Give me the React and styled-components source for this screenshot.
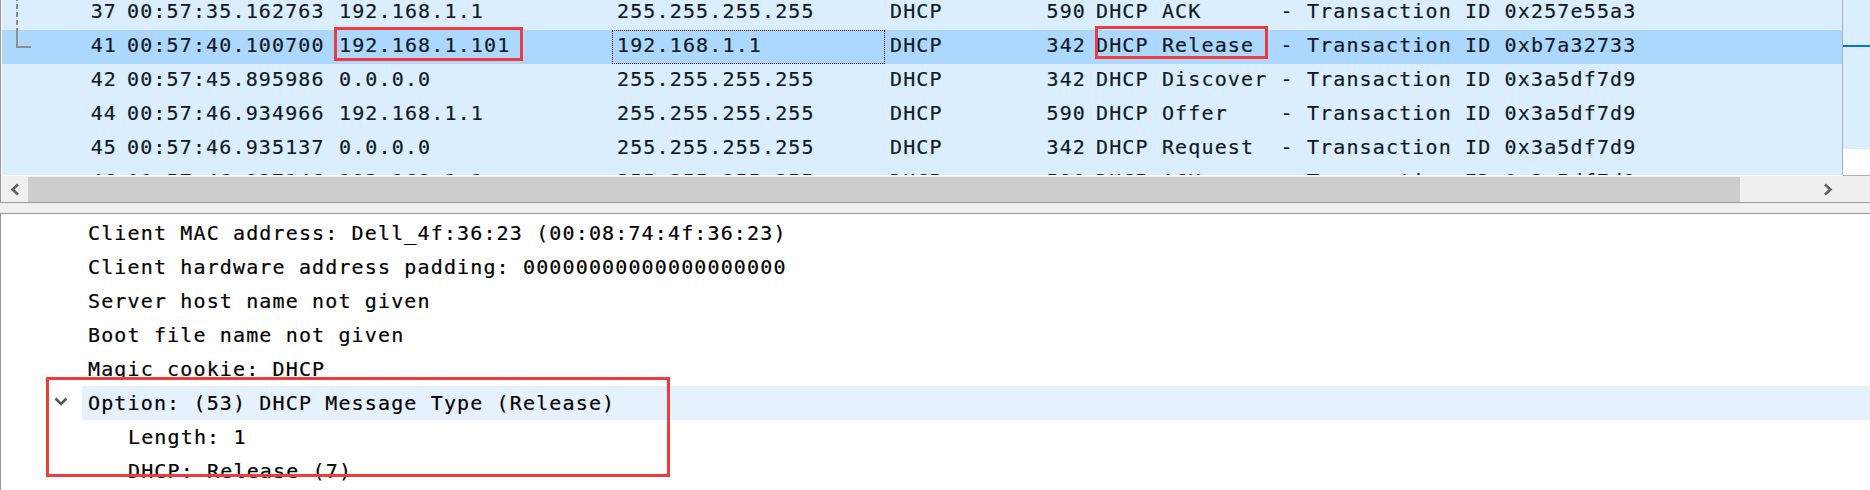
import React from 'react';
import styled, { createGlobalStyle } from 'styled-components';

const GlobalStyle = createGlobalStyle`
	html, body {
		margin: 0;
		padding: 0;
		background: #ffffff;
	}
	body {
		width: 1870px;
		height: 490px;
		overflow: hidden;
		font-family: 'DejaVu Sans Mono', 'Liberation Mono', monospace;
	}
`;

const packets = [
	{ no: 37, time: '00:57:35.162763', src: '192.168.1.1', dst: '255.255.255.255', proto: 'DHCP', len: 590, info: 'DHCP ACK      - Transaction ID 0x257e55a3', tree: 'dash' },
	{ no: 41, time: '00:57:40.100700', src: '192.168.1.101', dst: '192.168.1.1', proto: 'DHCP', len: 342, info: 'DHCP Release  - Transaction ID 0xb7a32733', tree: 'end', selected: true },
	{ no: 42, time: '00:57:45.895986', src: '0.0.0.0', dst: '255.255.255.255', proto: 'DHCP', len: 342, info: 'DHCP Discover - Transaction ID 0x3a5df7d9' },
	{ no: 44, time: '00:57:46.934966', src: '192.168.1.1', dst: '255.255.255.255', proto: 'DHCP', len: 590, info: 'DHCP Offer    - Transaction ID 0x3a5df7d9' },
	{ no: 45, time: '00:57:46.935137', src: '0.0.0.0', dst: '255.255.255.255', proto: 'DHCP', len: 342, info: 'DHCP Request  - Transaction ID 0x3a5df7d9' },
	{ no: 46, time: '00:57:46.937146', src: '192.168.1.1', dst: '255.255.255.255', proto: 'DHCP', len: 590, info: 'DHCP ACK      - Transaction ID 0x3a5df7d9' },
];

const details = [
	{ depth: 0, text: 'Client MAC address: Dell_4f:36:23 (00:08:74:4f:36:23)' },
	{ depth: 0, text: 'Client hardware address padding: 00000000000000000000' },
	{ depth: 0, text: 'Server host name not given' },
	{ depth: 0, text: 'Boot file name not given' },
	{ depth: 0, text: 'Magic cookie: DHCP' },
	{ depth: 0, text: 'Option: (53) DHCP Message Type (Release)', open: true, selected: true },
	{ depth: 1, text: 'Length: 1' },
	{ depth: 1, text: 'DHCP: Release (7)' },
];

const TreeMark = ({ kind }) => (
	<TreeSvg width='32' height='34' viewBox='0 0 32 34'>
		{kind === 'dash' && <line x1='15' y1='0' x2='15' y2='34' stroke='#8f8f8f' strokeWidth='2' strokeDasharray='5 3' />}
		{kind === 'end' && <polyline points='15,0 15,17 29,17' fill='none' stroke='#8f8f8f' strokeWidth='2' />}
	</TreeSvg>
);

const Arrow = ({ dir }) => (
	<svg width='10' height='13' viewBox='0 0 10 13'>
		<polyline
			points={dir === 'left' ? '8,1.5 2.5,6.5 8,11.5' : '2,1.5 7.5,6.5 2,11.5'}
			fill='none'
			stroke='#606060'
			strokeWidth='2.6'
		/>
	</svg>
);

const Chevron = () => (
	<ChevronSvg width='14' height='9' viewBox='0 0 14 9'>
		<polyline points='1.5,1.5 7,7 12.5,1.5' fill='none' stroke='#555555' strokeWidth='2.6' />
	</ChevronSvg>
);

const App = () => {
	return (
		<>
			<GlobalStyle />
			<Screen>
				<PacketPane>
					<PaneBody>
						<PacketList>
							<Rows>
								{packets.map((p) => (
									<PacketRow key={p.no} $selected={p.selected}>
										<NumCell>
											<TreeMark kind={p.tree} />
											<span>{p.no}</span>
										</NumCell>
										<Cell>{p.time}</Cell>
										<Cell>
											{p.src}
											{p.selected && <Mark $left={0} $top={-3} $w={189} $h={34} />}
										</Cell>
										<Cell $focus={p.selected}>{p.dst}</Cell>
										<Cell>{p.proto}</Cell>
										<Cell $right>{p.len}</Cell>
										<Cell>
											{p.info}
											{p.selected && <Mark $left={4} $top={-4} $w={173} $h={33} />}
										</Cell>
									</PacketRow>
								))}
							</Rows>
						</PacketList>
						<MiniMap>
							<MiniFill />
						</MiniMap>
					</PaneBody>
					<HScrollBar>
						<ScrollButton $w={27}>
							<Arrow dir='left' />
						</ScrollButton>
						<Thumb />
						<Track />
						<ScrollButton $w={28}>
							<Arrow dir='right' />
						</ScrollButton>
						<Corner />
					</HScrollBar>
				</PacketPane>
				<Splitter />
				<DetailPane>
					{details.map((d, i) => (
						<DetailRow key={i}>
							<Gutter $depth={d.depth}>{d.open && <Chevron />}</Gutter>
							<DetailText $selected={d.selected}>{d.text}</DetailText>
						</DetailRow>
					))}
					<Mark $left={45} $top={163} $w={624} $h={100} />
				</DetailPane>
			</Screen>
		</>
	);
};

export default App;

const Screen = styled.div`
	width: 1870px;
	height: 490px;
	display: flex;
	flex-direction: column;
	overflow: hidden;
	background: #ffffff;
`;

const PacketPane = styled.section`
	display: flex;
	flex-direction: column;
	border-bottom: 1px solid #9a9a9a;
`;

const PaneBody = styled.div`
	height: 176px;
	display: flex;
	border-left: 1px solid #9a9a9a;
`;

const PacketList = styled.div`
	flex: 1;
	height: 175px;
	padding-left: 1px;
	border-bottom: 1px solid #ffffff;
	border-right: 1px solid #b0b0b0;
	overflow: hidden;
	background: #ffffff;
`;

const Rows = styled.div`
	margin-top: -4px;
`;

const PacketRow = styled.div`
	display: grid;
	grid-template-columns: 120px 212px 278px 273px 156px 50px 1fr;
	height: 34px;
	background: ${(p) => (p.$selected ? '#acd7ff' : '#daeeff')};
	color: #111a22;
	font-size: 20px;
	letter-spacing: 1.14px;
	line-height: 31px;
	-webkit-text-stroke: 0.2px #111a22;
`;

const Cell = styled.div`
	position: relative;
	padding: 0 5px;
	white-space: pre;
	text-align: ${(p) => (p.$right ? 'right' : 'left')};
	outline: ${(p) => (p.$focus ? '1px dotted #000000' : 'none')};
	outline-offset: -1px;
`;

const NumCell = styled.div`
	display: flex;
	justify-content: space-between;
	align-items: flex-start;
	padding-right: 5px;
`;

const TreeSvg = styled.svg`
	flex: none;
	display: block;
`;

const Mark = styled.div`
	position: absolute;
	left: ${(p) => p.$left}px;
	top: ${(p) => p.$top}px;
	width: ${(p) => p.$w}px;
	height: ${(p) => p.$h}px;
	box-sizing: border-box;
	border: 3px solid #ee3b3b;
	z-index: 2;
	pointer-events: none;
`;

const MiniMap = styled.div`
	width: 27px;
	height: 175px;
	display: flex;
	flex-direction: column;
	border-bottom: 1px solid #b0b0b0;
	background: #ffffff;
`;

const MiniFill = styled.div`
	height: 149px;
	background: linear-gradient(
		to bottom,
		#daeeff 45px,
		#0078d7 45px,
		#0078d7 47px,
		#daeeff 47px
	);
`;

const HScrollBar = styled.div`
	height: 26px;
	display: flex;
	border-left: 1px solid #9a9a9a;
	background: #f0f0f0;
`;

const ScrollButton = styled.div`
	width: ${(p) => p.$w}px;
	flex: none;
	display: flex;
	align-items: center;
	justify-content: center;
	padding-top: 1px;
`;

const Thumb = styled.div`
	width: 1712px;
	flex: none;
	background: #cdcdcd;
	margin-top: 1px;
`;

const Track = styled.div`
	flex: 1;
`;

const Corner = styled.div`
	width: 28px;
	flex: none;
`;

const Splitter = styled.div`
	height: 10px;
	background: #f0f0f0;
	border-bottom: 1px solid #9a9a9a;
`;

const DetailPane = styled.section`
	position: relative;
	flex: 1;
	padding-top: 2px;
	border-left: 1px solid #9a9a9a;
	overflow: hidden;
	background: #ffffff;
`;

const DetailRow = styled.div`
	display: flex;
	height: 34px;
	color: #000000;
	font-size: 20px;
	letter-spacing: 1.14px;
	line-height: 34px;
	-webkit-text-stroke: 0.2px #000000;
`;

const Gutter = styled.div`
	width: ${(p) => 81 + p.$depth * 40}px;
	flex: none;
	box-sizing: border-box;
	display: flex;
	justify-content: flex-end;
	align-items: center;
	padding-right: 14px;
`;

const ChevronSvg = styled.svg`
	display: block;
	margin-top: -3px;
`;

const DetailText = styled.div`
	flex: 1;
	padding-left: 6px;
	white-space: pre;
	background: ${(p) => (p.$selected ? '#e5f2fe' : 'transparent')};
`;
